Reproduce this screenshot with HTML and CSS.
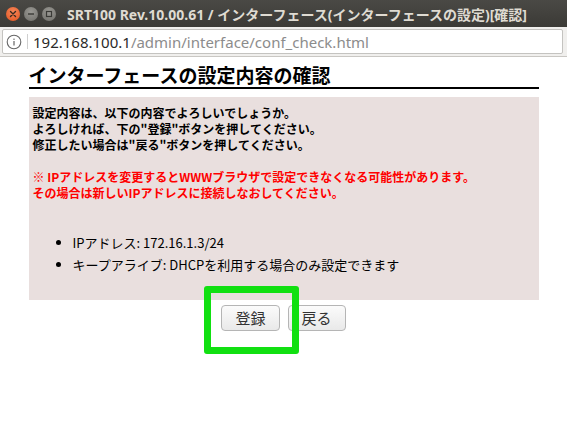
FILE: index.html
```html
<!DOCTYPE html>
<html lang="ja">
<head>
<meta charset="utf-8">
<title>SRT100</title>
<link rel="stylesheet" href="styles.css">
</head>
<body>
<div class="titlebar">
  <div class="winbtns">
    <span class="wb close"><svg width="14" height="14" viewBox="0 0 14 14"><path d="M4.5 4.5 L9.5 9.5 M9.5 4.5 L4.5 9.5" stroke="#3a2a20" stroke-width="1.4" stroke-linecap="round"/></svg></span>
    <span class="wb"><svg width="14" height="14" viewBox="0 0 14 14"><path d="M4 7 H10" stroke="#3a3a36" stroke-width="1.4"/></svg></span>
    <span class="wb"><svg width="14" height="14" viewBox="0 0 14 14"><rect x="4.5" y="4.5" width="5" height="5" fill="none" stroke="#3a3a36" stroke-width="1.2"/></svg></span>
  </div>
  <div class="wintitle">SRT100 Rev.10.00.61 / インターフェース(インターフェースの設定)[確認]</div>
</div>
<div class="addrbar">
  <div class="addrbox">
    <svg class="info" width="16" height="16" viewBox="0 0 16 16"><circle cx="8" cy="8" r="6.8" fill="none" stroke="#666" stroke-width="1.1"/><rect x="7.4" y="7" width="1.2" height="4.5" fill="#666"/><rect x="7.4" y="4.6" width="1.2" height="1.3" fill="#666"/></svg>
    <span class="sep"></span>
    <span class="url"><span class="host">192.168.100.1</span>/admin/interface/conf_check.html</span>
  </div>
</div>
<main class="page">
  <h1 class="heading">インターフェースの設定内容の確認</h1>
  <div class="panel">
    <p class="msg">設定内容は、以下の内容でよろしいでしょうか。<br>よろしければ、下の"登録"ボタンを押してください。<br>修正したい場合は"戻る"ボタンを押してください。</p>
    <p class="warn">※ IPアドレスを変更するとWWWブラウザで設定できなくなる可能性があります。<br>その場合は新しいIPアドレスに接続しなおしてください。</p>
    <ul class="items">
      <li>IPアドレス: 172.16.1.3/24</li>
      <li>キープアライブ: DHCPを利用する場合のみ設定できます</li>
    </ul>
  </div>
  <div class="actions">
    <button class="btn">登録</button>
    <button class="btn">戻る</button>
  </div>
  <div class="highlight"></div>
</main>
</body>
</html>
```
FILE: styles.css
```css
html, body { margin: 0; padding: 0; background: #fff; }
body { font-family: "Noto Sans CJK JP", "Noto Sans", sans-serif; color: #000; min-height: 447px; }

.titlebar {
  height: 27px;
  background: linear-gradient(#4a4945, #3b3a36);
  display: flex;
  align-items: center;
  padding-left: 6px;
  box-sizing: border-box;
}
.winbtns { display: flex; gap: 4px; }
.wb {
  width: 14px; height: 14px; border-radius: 50%;
  background: radial-gradient(circle at 50% 35%, #9a9994, #6f6e69);
  display: block;
}
.wb svg { display: block; }
.wb.close { background: radial-gradient(circle at 50% 35%, #f7875a, #e0531f); }
.wintitle {
  margin-left: 11px;
  color: #dfdbd2;
  font-family: "Noto Sans", "Noto Sans CJK JP", sans-serif;
  font-weight: bold;
  font-size: 14px;
  white-space: nowrap;
}

.addrbar {
  height: 30px;
  background: #f0efed;
  border-bottom: 1px solid #c9c7c3;
  padding: 2px 4px 3px 2px;
  box-sizing: border-box;
}
.addrbox {
  height: 25px;
  background: #fff;
  border: 1px solid #c4c3c0;
  border-radius: 2px;
  box-sizing: border-box;
  display: flex;
  align-items: center;
  padding-left: 3px;
}
.info { display: block; }
.sep { width: 1px; height: 15px; background: #cfcfcf; margin: 0 5px 0 5px; }
.url {
  font-family: "Noto Sans", sans-serif;
  font-size: 15px;
  color: #8c8c8c;
  white-space: nowrap;
}
.host { color: #2a2a2a; }

.page { width: 510px; margin: 0 auto; padding-top: 6px; position: relative; }
.heading {
  margin: 0;
  font-size: 19px;
  line-height: 24px;
  font-weight: bold;
  border-bottom: 2px solid #000;
}
.panel {
  margin-top: 8px;
  background: #e9dfde;
  padding: 8px 4px 24px 4px;
  height: 203px;
  box-sizing: border-box;
}
.msg, .warn {
  margin: 0;
  font-size: 12px;
  line-height: 16px;
  font-weight: bold;
}
.msg { margin-bottom: 16px; }
.warn { color: #ff0000; }
.items {
  margin: 31px 0 0 0;
  padding-left: 40px;
  font-size: 13px;
  line-height: 22px;
}
.actions {
  display: flex;
  justify-content: center;
  gap: 8px;
  margin-top: 5px;
}
.btn {
  font-family: "Noto Sans CJK JP", sans-serif;
  font-size: 15px;
  color: #333;
  height: 26px;
  padding: 0 13px;
  border: 1px solid #b5b5b5;
  border-radius: 4px;
  background: linear-gradient(#fbfbfb, #e9e9e9);
  line-height: 22px;
}
.highlight {
  position: absolute;
  left: 175px;
  top: 229px;
  width: 95px;
  height: 68px;
  box-sizing: border-box;
  border: 7px solid #11e011;
  border-radius: 3px;
}
```
